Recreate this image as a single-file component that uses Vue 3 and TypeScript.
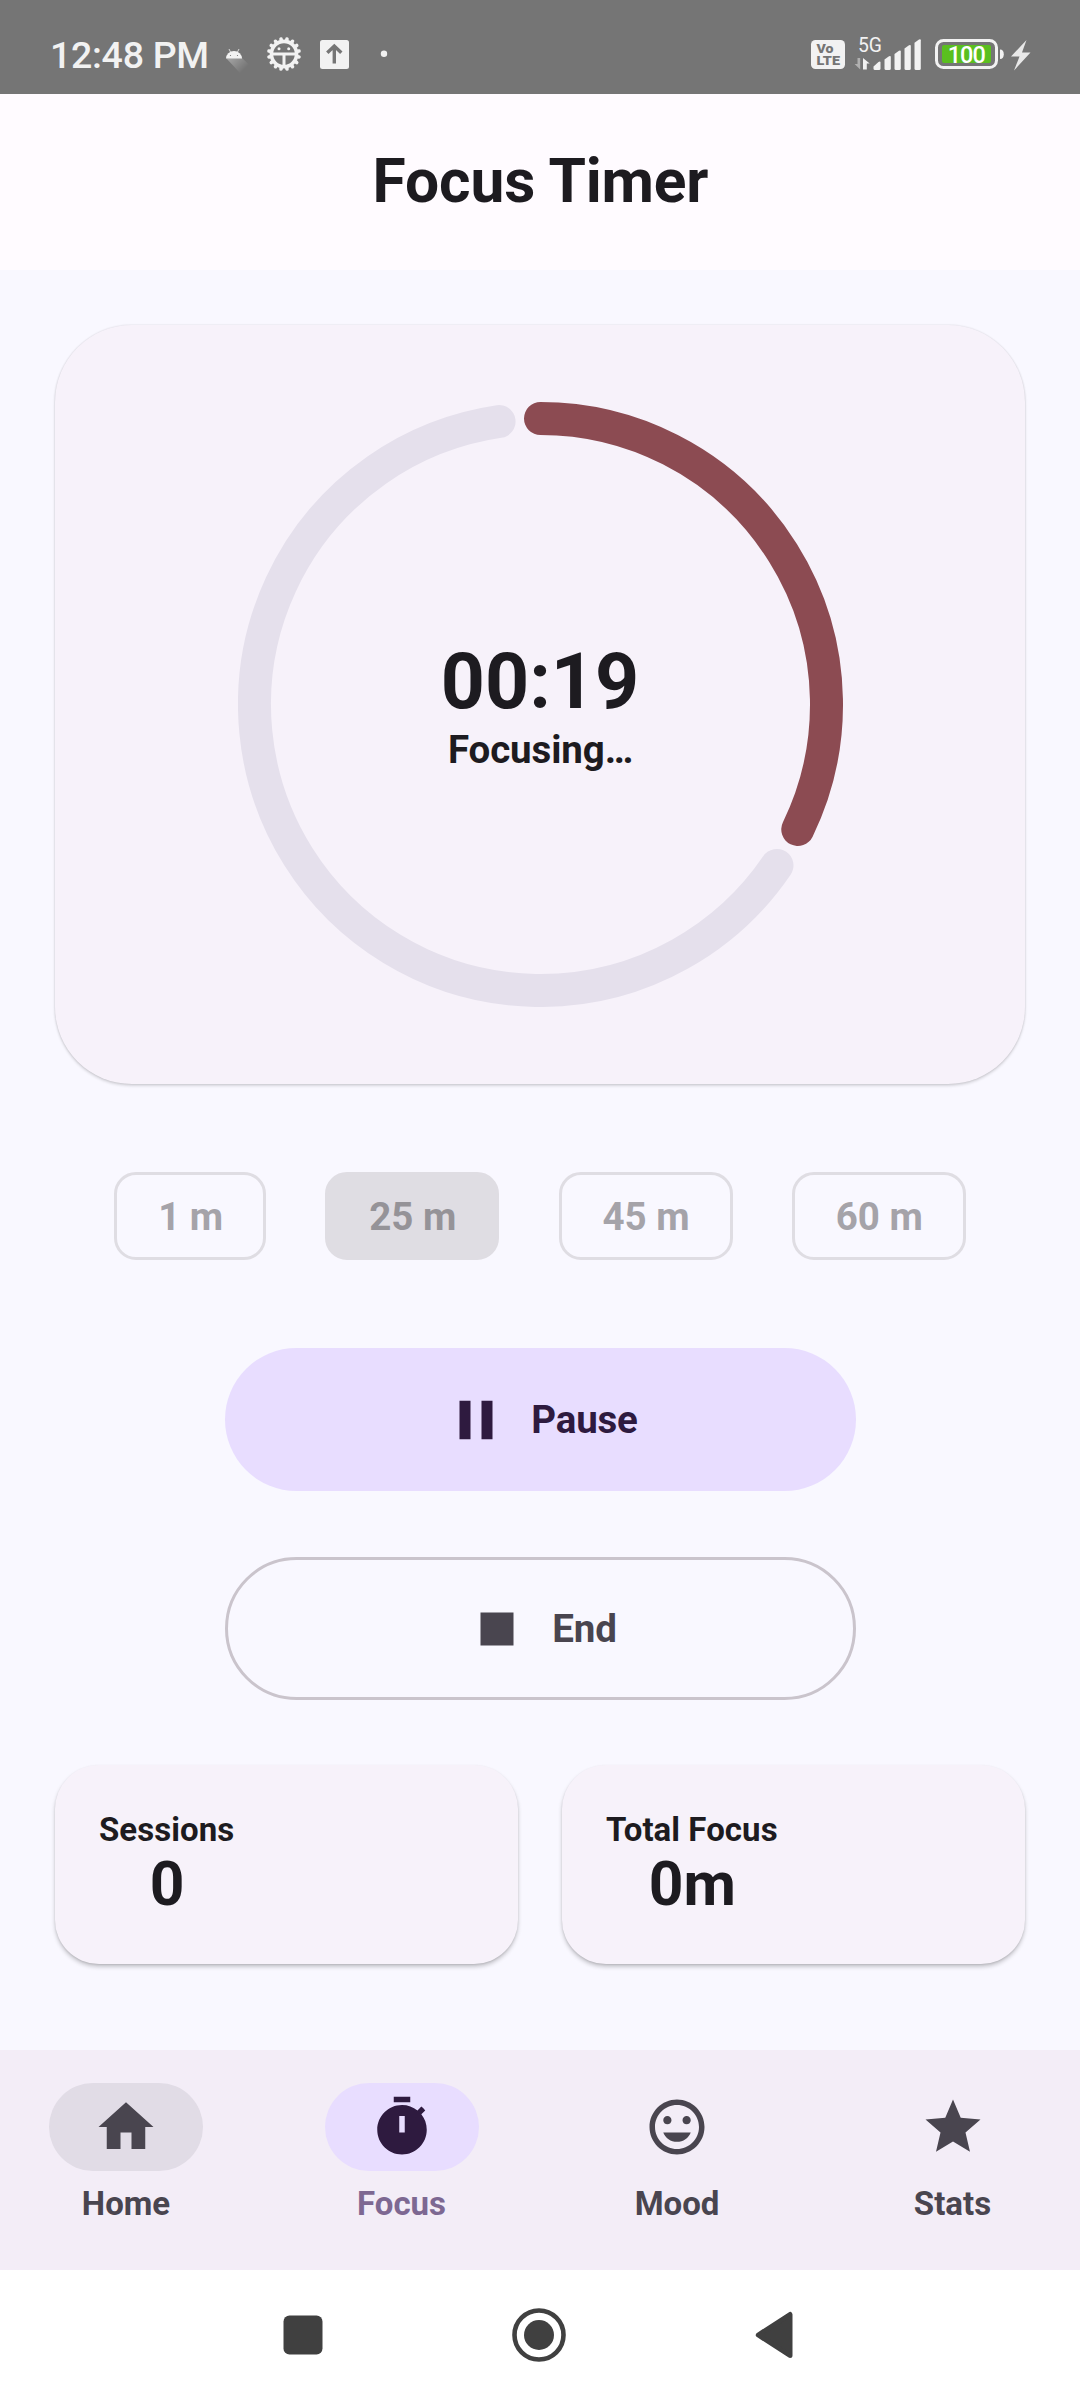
<script setup lang="ts">
interface Stat {
  label: string
  value: string
}
interface NavItem {
  label: string
  path: string
  state: '' | 'active' | 'pressed'
}

const durations = [1, 25, 45, 60]
const selectedDuration = 25

const stats: Stat[] = [
  { label: 'Sessions', value: '0' },
  { label: 'Total Focus', value: '0m' },
]

const navItems: NavItem[] = [
  { label: 'Home', state: 'pressed', path: 'M10 20v-6h4v6h5v-8h3L12 3 2 12h3v8z' },
  {
    label: 'Focus',
    state: 'active',
    path: 'M9 1h6v2H9zM19.03 7.39l1.42-1.42c-.43-.51-.9-.99-1.41-1.41l-1.42 1.42C16.07 4.74 14.12 4 12 4c-4.97 0-9 4.03-9 9s4.02 9 9 9 9-4.03 9-9c0-2.12-.74-4.07-1.97-5.61zM13 14h-2V8h2v6z',
  },
  {
    label: 'Mood',
    state: '',
    path: 'M11.99 2C6.47 2 2 6.48 2 12s4.47 10 9.99 10C17.52 22 22 17.52 22 12S17.52 2 11.99 2zM12 20c-4.42 0-8-3.58-8-8s3.58-8 8-8 8 3.58 8 8-3.58 8-8 8zM15.5 11c.83 0 1.5-.67 1.5-1.5S16.33 8 15.5 8 14 8.67 14 9.5s.67 1.5 1.5 1.5zM8.500 11c.83 0 1.500-.67 1.500-1.500S9.330 8 8.500 8 7 8.670 7 9.500 7.670 11 8.500 11zM7 14c.78 2.050 2.720 3.400 5 3.400s4.220-1.350 5-3.400z',
  },
  {
    label: 'Stats',
    state: '',
    path: 'M12 17.27 18.18 21l-1.64-7.03L22 9.24l-7.19-.61L12 2 9.19 8.63 2 9.24l5.46 4.73L5.82 21z',
  },
]

// Ring geometry: 605px across with a 33px round-capped stroke.
const size = 605
const stroke = 33
const radius = (size - stroke) / 2
const sweep = 115.9
const gap = 8.33

function point(deg: number): string {
  const a = ((deg - 90) * Math.PI) / 180
  return `${(size / 2 + radius * Math.cos(a)).toFixed(2)} ${(size / 2 + radius * Math.sin(a)).toFixed(2)}`
}
function arc(from: number, to: number): string {
  return `M${point(from)}A${radius} ${radius} 0 ${to - from > 180 ? 1 : 0} 1 ${point(to)}`
}
const progressArc = arc(0, sweep)
const trackArc = arc(sweep + gap, 360 - gap)

const teeth = Array.from({ length: 16 }, (_, i) => i * 22.5 + 11.25)
</script>

<template>
  <div class="screen">
    <div class="status">
      <span class="clock">12:48 PM</span>
      <svg class="notices" width="170" height="94" viewBox="222 0 170 94">
        <defs>
          <linearGradient id="fade" x1="230" y1="56" x2="244" y2="70" gradientUnits="userSpaceOnUse">
            <stop offset="0" stop-color="#fff" stop-opacity=".35" />
            <stop offset="1" stop-color="#fff" stop-opacity="0" />
          </linearGradient>
        </defs>
        <path d="M226.500 58.500 241 57 249 64.500 240 73z" fill="url(#fade)" />
        <path d="M226 58.500a8 7.500 0 0 1 16 0z" fill="#f2f2f2" />
        <path d="M229 49l1.500 3M239 49l-1.500 3" stroke="#f2f2f2" stroke-width=".8" />
        <circle cx="230.500" cy="55.500" r=".6" fill="#757575" />
        <circle cx="237.500" cy="55.500" r=".6" fill="#757575" />
        <g stroke="#f2f2f2" fill="none">
          <circle cx="284" cy="54" r="12.600" stroke-width="3.600" />
          <path
            v-for="t in teeth"
            :key="t"
            d="M284 40v-1.300"
            stroke-width="3.600"
            stroke-linecap="round"
            :transform="`rotate(${t} 284 54)`"
          />
          <path d="M272 54h24M284 54v13" stroke-width="3" />
        </g>
        <circle cx="279" cy="48.700" r="1.500" fill="#f2f2f2" />
        <circle cx="288.700" cy="48.700" r="1.500" fill="#f2f2f2" />
        <rect x="320" y="40" width="29" height="29" rx="2.500" fill="#f2f2f2" />
        <path d="M334.300 63.500V47M327.300 52.800l7-6.800 7 6.800" fill="none" stroke="#757575" stroke-width="3.400" />
        <circle cx="384" cy="53.800" r="3.200" fill="#f2f2f2" />
      </svg>
      <svg class="system" width="230" height="94" viewBox="805 0 230 94">
        <rect x="811" y="40" width="34" height="29" rx="4.500" fill="#f2f2f2" />
        <text class="volte" x="816.500" y="52.900" textLength="17" lengthAdjust="spacingAndGlyphs">Vo</text>
        <text class="volte" x="816.500" y="65.300" textLength="23.500" lengthAdjust="spacingAndGlyphs">LTE</text>
        <text class="net" x="858" y="52.200" textLength="24" lengthAdjust="spacingAndGlyphs">5G</text>
        <path d="M857.500 58h2.700v11.500l-5.600-5.500h2.900z" fill="#b0b0b0" />
        <path d="M863 69.500V58l6.700 5.500h-2.900v6z" fill="#f2f2f2" />
        <g fill="#f2f2f2">
          <path d="M873.500 66.500l5-4.500q2-1 2 .5V68.500q0 1.500-1.500 1.500h-4q-1.500 0-1.500-1.500z" />
          <path d="M884.500 59.500l4.500-3.300q1.800-.8 1.800.8V68.500q0 1.500-1.500 1.500h-3.300q-1.500 0-1.500-1.500z" />
          <path d="M894.500 54l4.500-3.300q1.800-.8 1.800.8V68.500q0 1.500-1.500 1.500h-3.300q-1.500 0-1.500-1.500z" />
          <path d="M904.500 48.500l4.500-3.300q1.800-.8 1.800.8V68.500q0 1.500-1.500 1.500h-3.300q-1.500 0-1.500-1.500z" />
          <path d="M914.500 42.800l4.500-3.300q1.800-.8 1.800.8V68.500q0 1.500-1.500 1.500h-3.300q-1.500 0-1.500-1.500z" />
        </g>
        <rect x="936.500" y="40.500" width="60" height="27" rx="7" fill="none" stroke="#f2f2f2" stroke-width="3" />
        <rect x="942" y="45" width="49" height="18" rx="2" fill="#5abf1f" />
        <path d="M1000 49.500q3.800 0 3.800 4.700t-3.800 4.700z" fill="#f2f2f2" />
        <text class="charge" x="966.800" y="62.500" text-anchor="middle" textLength="38">100</text>
        <path d="M1026.500 40 1011 56.500h8.500L1014 70.500l16.500-18h-8.500z" fill="#e8e8e8" />
      </svg>
    </div>

    <header class="title-bar"><h1>Focus Timer</h1></header>

    <main class="content">
      <section class="timer-card">
        <div class="ring">
          <svg :width="size" :height="size" :viewBox="`0 0 ${size} ${size}`" fill="none" :stroke-width="stroke" stroke-linecap="round">
            <path :d="trackArc" stroke="#e5e0ec" />
            <path :d="progressArc" stroke="#8c4b52" />
          </svg>
          <div class="readout">
            <div class="time">00:19</div>
            <div class="phase">Focusing…</div>
          </div>
        </div>
      </section>

      <div class="chips">
        <button v-for="d in durations" :key="d" class="chip" :class="{ selected: d === selectedDuration }">{{ d }} m</button>
      </div>

      <button class="action pause">
        <svg class="icon" viewBox="0 0 24 24"><path d="M6 19h4V5H6v14zm8-14v14h4V5h-4z" /></svg>
        <span>Pause</span>
      </button>
      <button class="action end">
        <svg class="icon" viewBox="0 0 24 24"><path d="M6 6h12v12H6z" /></svg>
        <span>End</span>
      </button>

      <div class="stats">
        <section v-for="s in stats" :key="s.label" class="stat">
          <div class="stat-body">
            <div class="stat-label">{{ s.label }}</div>
            <div class="stat-value">{{ s.value }}</div>
          </div>
        </section>
      </div>
    </main>

    <nav class="tabs">
      <a v-for="n in navItems" :key="n.label" class="tab" :class="n.state">
        <span class="pill"><svg class="icon" viewBox="0 0 24 24"><path :d="n.path" /></svg></span>
        <span class="tab-label">{{ n.label }}</span>
      </a>
    </nav>

    <div class="system-nav">
      <svg width="56" height="56" viewBox="0 0 56 56"><rect x="8.500" y="8.500" width="39" height="39" rx="6" /></svg>
      <svg width="56" height="56" viewBox="0 0 56 56">
        <circle cx="28" cy="28" r="24.500" fill="none" stroke="#404040" stroke-width="4.600" />
        <circle cx="28" cy="28" r="15" />
      </svg>
      <svg width="56" height="56" viewBox="0 0 56 56">
        <path d="M11.300 28 43 7.500V48.500z" stroke="#404040" stroke-width="5" stroke-linejoin="round" />
      </svg>
    </div>
  </div>
</template>

<style>
body {
  margin: 0;
}
</style>

<style scoped>
.screen {
  width: 1080px;
  height: 2400px;
  display: flex;
  flex-direction: column;
  overflow: hidden;
  background: #f9f8ff;
  color: #1d1b20;
  font-family: Roboto, 'Liberation Sans', sans-serif;
}
svg {
  display: block;
  flex: none;
}
button {
  font: inherit;
  background: none;
  border: 0;
  padding: 0;
  margin: 0;
  box-sizing: border-box;
}
.status {
  height: 94px;
  display: flex;
  align-items: center;
  background: #757575;
  color: #f2f2f2;
  flex: none;
}
.clock {
  width: 172px;
  padding: 16px 0 0 50px;
  font-size: 37.500px;
  line-height: 44px;
  font-weight: 500;
  letter-spacing: -0.3px;
  white-space: nowrap;
}
.system {
  margin-left: auto;
  margin-right: 45px;
}
.volte {
  font-size: 12.200px;
  font-weight: 900;
  fill: #757575;
}
.net {
  font-size: 20px;
  fill: #f2f2f2;
}
.charge {
  font-size: 23.500px;
  font-weight: 500;
  fill: #fff;
}
.title-bar {
  height: 176px;
  box-sizing: border-box;
  padding: 0 0 2px 1px;
  flex: none;
  display: flex;
  align-items: center;
  justify-content: center;
  background: #fffbff;
}
h1 {
  margin: 0;
  font-size: 60.500px;
  line-height: 77px;
  font-weight: 680;
  letter-spacing: -0.15px;
}
.content {
  height: 1780px;
  box-sizing: border-box;
  padding: 55px 55px 0;
  display: flex;
  flex-direction: column;
  align-items: center;
  flex: none;
}
.timer-card {
  width: 970px;
  height: 759px;
  box-sizing: border-box;
  padding: 77px;
  display: flex;
  justify-content: center;
  border-radius: 77px;
  background: #f7f2fa;
  box-shadow: 0 2px 3px rgba(0, 0, 0, 0.14), 0 0 2px rgba(0, 0, 0, 0.14);
}
.ring {
  display: grid;
}
.ring > * {
  grid-area: 1 / 1;
}
.readout {
  display: flex;
  flex-direction: column;
  align-items: center;
  justify-content: center;
}
.time {
  font-size: 77px;
  line-height: 90px;
  font-weight: 700;
}
.phase {
  padding-left: 1px;
  font-size: 38.500px;
  line-height: 46px;
  font-weight: 660;
  letter-spacing: -0.1px;
}
.chips {
  width: 970px;
  display: flex;
  justify-content: space-evenly;
  margin: 88px 0;
}
.chip {
  height: 88px;
  padding: 0 40px 0 41px;
  border: 3px solid #dfdde3;
  border-radius: 22px;
  color: #a5a3a9;
  font-size: 38.500px;
  font-weight: 660;
}
.chip.selected {
  background: #dfdde3;
  color: #959398;
}
.action {
  width: 631px;
  height: 143px;
  padding-left: 1px;
  display: flex;
  align-items: center;
  justify-content: center;
  gap: 22px;
  border-radius: 72px;
  font-size: 38.500px;
  font-weight: 660;
  letter-spacing: -0.2px;
}
.icon {
  width: 66px;
  height: 66px;
  fill: currentColor;
}
.pause {
  background: #e8ddff;
  color: #2e1a3f;
}
.end {
  margin: 66px 0 65px;
  border: 3px solid #cac4cc;
  color: #49454f;
}
.stats {
  width: 970px;
  display: flex;
  gap: 44px;
}
.stat {
  flex: 1;
  height: 199px;
  box-sizing: border-box;
  padding: 45px 44px 43px;
  display: flex;
  border-radius: 44px;
  background: #f7f2fa;
  box-shadow: 0 3px 4px rgba(0, 0, 0, 0.2), 0 1px 2px rgba(0, 0, 0, 0.1);
}
.stat-body {
  display: flex;
  flex-direction: column;
  align-items: center;
}
.stat-label {
  font-size: 33px;
  line-height: 39px;
  font-weight: 660;
  letter-spacing: 0.05px;
}
.stat-value {
  padding-left: 1px;
  font-size: 60.500px;
  line-height: 72px;
  font-weight: 700;
}
.tabs {
  height: 220px;
  flex: none;
  display: flex;
  gap: 22px;
  background: #f3edf7;
  color: #49454f;
}
.tab {
  flex: 1;
  display: flex;
  flex-direction: column;
  align-items: center;
  padding: 33px 1.500px 0 0;
}
.pill {
  width: 154px;
  height: 88px;
  display: flex;
  align-items: center;
  justify-content: center;
  border-radius: 44px;
}
.pressed .pill {
  background: #e1dce6;
}
.active .pill {
  background: #e8ddff;
  color: #2e1a3f;
}
.tab-label {
  margin-top: 11px;
  font-size: 33px;
  line-height: 44px;
  font-weight: 680;
}
.active .tab-label {
  color: #7d6892;
}
.system-nav {
  height: 130px;
  flex: none;
  display: flex;
  align-items: center;
  justify-content: center;
  gap: 180px;
  padding-right: 3px;
  background: #fff;
  fill: #404040;
}
</style>
